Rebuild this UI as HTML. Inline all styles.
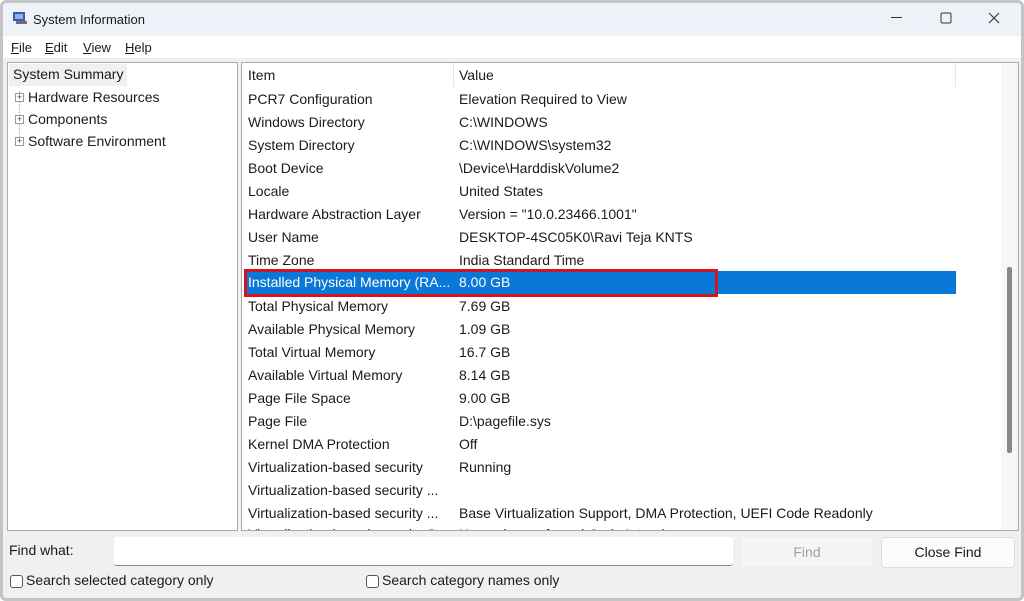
<!DOCTYPE html>
<html><head><meta charset="utf-8"><style>
*{box-sizing:border-box;margin:0;padding:0}
body{width:1024px;height:601px;overflow:hidden;background:#fff;font-family:"Liberation Sans",sans-serif;font-size:14px;color:#1a1a1a;position:relative}
.win{position:absolute;left:0;top:0;width:1024px;height:601px;background:#f0f0f0;border:3px solid #c4c4c4;border-radius:6px;overflow:hidden}
.title{position:absolute;left:0;top:0;right:0;height:33px;background:#eef1f8}
.title span{position:absolute;left:30px;top:9px;font-size:13px}
.menu{position:absolute;left:0;top:33px;right:0;height:22px;background:#fff}
.menu span{position:absolute;top:4px;font-size:13px}
.pane{position:absolute;background:#fff;border:1px solid #aaa}
.t{position:absolute;white-space:nowrap}
.row{position:absolute;left:6px;white-space:nowrap;height:22px;line-height:22px;font-size:14px}
.row b{font-weight:normal;position:absolute;left:211px}
.btn{position:absolute;border:1px solid #ddd;border-radius:4px;background:#fbfbfb;text-align:center;line-height:29px;font-size:14px}
.cb{position:absolute;width:13px;height:13px;border:1px solid #555;border-radius:3px;background:#fff}
.plus{position:absolute;left:7px;width:9px;height:9px;border:1px solid #999;background:#fff;font-size:9px;line-height:7px;text-align:center;color:#444}
</style></head><body>
<div class="win">
<div class="title">
<svg style="position:absolute;left:9px;top:8px" width="16" height="14"><rect x="1" y="1" width="12" height="9" fill="#3b5aa8"/><rect x="3" y="3" width="8" height="5" fill="#8fb0e8"/><rect x="4" y="10" width="11" height="3" fill="#6b6b8a"/></svg>
<span>System Information</span>
<svg style="position:absolute;left:888px;top:14px" width="12" height="2"><rect width="11" height="1" fill="#333"/></svg>
<svg style="position:absolute;left:937px;top:9px" width="12" height="12"><rect x="1" y="1" width="10" height="10" rx="1.5" fill="none" stroke="#333"/></svg>
<svg style="position:absolute;left:985px;top:9px" width="12" height="12"><path d="M1 1L11 11M11 1L1 11" stroke="#333" stroke-width="1.1"/></svg>
</div>
<div class="menu">
<span style="left:8px"><u>F</u>ile</span><span style="left:42px"><u>E</u>dit</span><span style="left:80px"><u>V</u>iew</span><span style="left:122px"><u>H</u>elp</span>
</div>
<div class="pane" style="left:4px;top:59px;width:231px;height:469px">
<div class="t" style="left:1px;top:1px;height:22px;line-height:21px;padding:0 4px;background:#f0f0f0;font-size:14px">System Summary</div>
<div style="position:absolute;left:11px;top:28px;height:52px;border-left:1px dotted #aaa"></div>
<div class="plus" style="top:30px">+</div><div class="t" style="left:20px;top:26px;font-size:14px">Hardware Resources</div>
<div class="plus" style="top:52px">+</div><div class="t" style="left:20px;top:48px;font-size:14px">Components</div>
<div class="plus" style="top:74px">+</div><div class="t" style="left:20px;top:70px;font-size:14px">Software Environment</div>
</div>
<div class="pane" style="left:238px;top:59px;width:778px;height:469px;overflow:hidden">
<div style="position:absolute;left:211px;top:0;height:24px;border-left:1px solid #e5e5e5"></div>
<div style="position:absolute;left:713px;top:0;height:24px;border-left:1px solid #e5e5e5"></div>
<div class="row" style="top:1px">Item<b>Value</b></div>
<div class="row" style="top:25px">PCR7 Configuration<b>Elevation Required to View</b></div>
<div class="row" style="top:48px">Windows Directory<b>C:\WINDOWS</b></div>
<div class="row" style="top:71px">System Directory<b>C:\WINDOWS\system32</b></div>
<div class="row" style="top:94px">Boot Device<b>\Device\HarddiskVolume2</b></div>
<div class="row" style="top:117px">Locale<b>United States</b></div>
<div class="row" style="top:140px">Hardware Abstraction Layer<b>Version = "10.0.23466.1001"</b></div>
<div class="row" style="top:163px">User Name<b>DESKTOP-4SC05K0\Ravi Teja KNTS</b></div>
<div class="row" style="top:186px">Time Zone<b>India Standard Time</b></div>
<div style="position:absolute;left:3px;top:208px;width:711px;height:23px;background:#0a78d7"></div>
<div style="position:absolute;left:2px;top:206px;width:474px;height:28px;border:3px solid #d2141e"></div>
<div class="row" style="top:208px;color:#fff">Installed Physical Memory (RA...<b>8.00 GB</b></div>
<div class="row" style="top:232px">Total Physical Memory<b>7.69 GB</b></div>
<div class="row" style="top:255px">Available Physical Memory<b>1.09 GB</b></div>
<div class="row" style="top:278px">Total Virtual Memory<b>16.7 GB</b></div>
<div class="row" style="top:301px">Available Virtual Memory<b>8.14 GB</b></div>
<div class="row" style="top:324px">Page File Space<b>9.00 GB</b></div>
<div class="row" style="top:347px">Page File<b>D:\pagefile.sys</b></div>
<div class="row" style="top:370px">Kernel DMA Protection<b>Off</b></div>
<div class="row" style="top:393px">Virtualization-based security<b>Running</b></div>
<div class="row" style="top:416px">Virtualization-based security ...<b></b></div>
<div class="row" style="top:439px">Virtualization-based security ...<b>Base Virtualization Support, DMA Protection, UEFI Code Readonly</b></div>
<div class="row" style="top:460px">Virtualization-based security S...<b>Hypervisor enforced Code Integrity</b></div>
<div style="position:absolute;left:759px;top:0;width:18px;height:469px;background:#f7f7f7"></div>
<div style="position:absolute;left:765px;top:204px;width:5px;height:186px;background:#888;border-radius:2px"></div>
</div>
<div class="t" style="left:6px;top:539px;font-size:14px">Find what:</div>
<div style="position:absolute;left:111px;top:534px;width:619px;height:29px;background:#fff;border-bottom:1px solid #888;border-radius:3px"></div>
<div class="btn" style="left:737px;top:534px;width:134px;height:31px;color:#a0a0a0;background:#f5f5f5;border-color:#eee">Find</div>
<div class="btn" style="left:878px;top:534px;width:134px;height:31px">Close Find</div>
<div class="cb" style="left:7px;top:572px"></div><div class="t" style="left:23px;top:569px;font-size:14px">Search selected category only</div>
<div class="cb" style="left:363px;top:572px"></div><div class="t" style="left:379px;top:569px;font-size:14px">Search category names only</div>
</div>
</body></html>
